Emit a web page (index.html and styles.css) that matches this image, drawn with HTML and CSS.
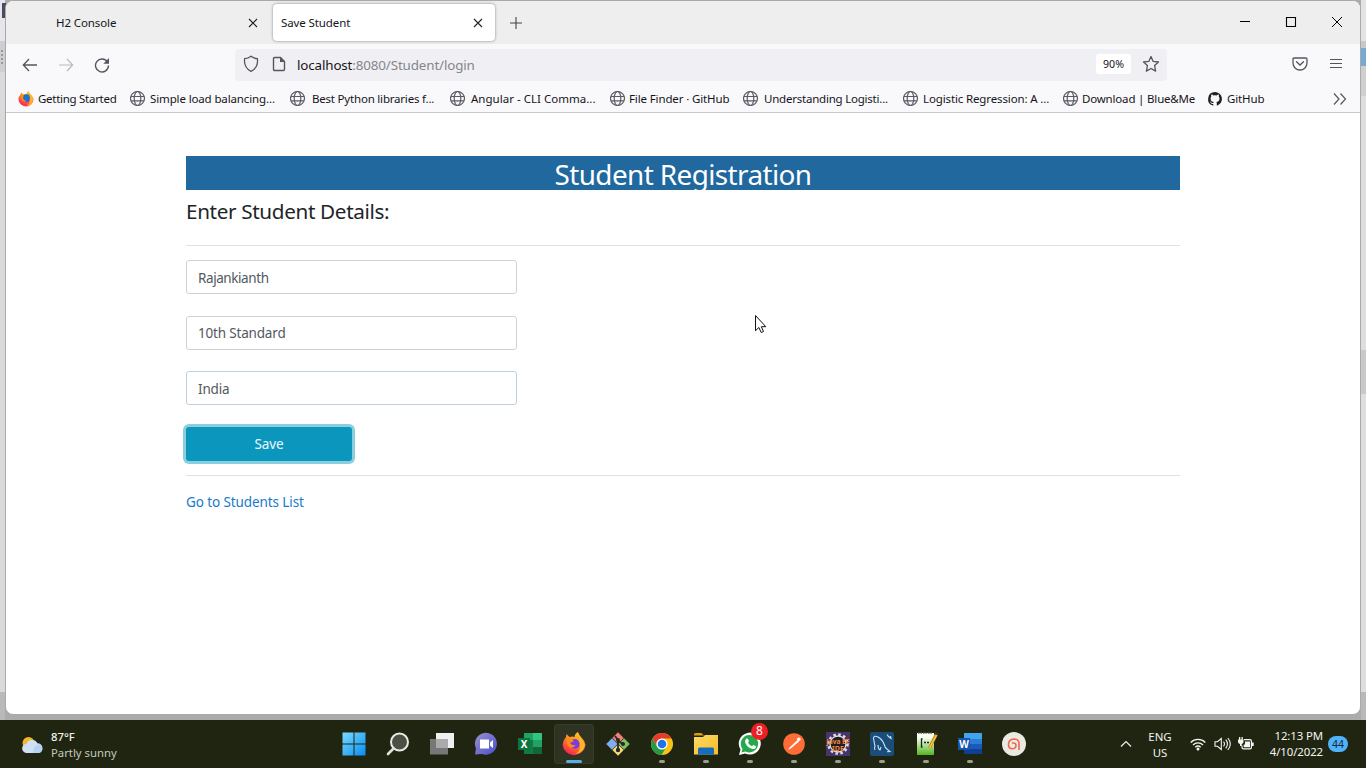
FILE: index.html
```html
<!DOCTYPE html>
<html lang="en">
<head>
<meta charset="utf-8">
<title>Save Student</title>
<link rel="stylesheet" href="styles.css">
</head>
<body>
<svg class="defs" width="0" height="0">
  <symbol id="globe" viewBox="0 0 16 16"><g fill="none" stroke="#5b5b66" stroke-width="1.2"><circle cx="7.500" cy="7.500" r="7"/><ellipse cx="7.500" cy="7.500" rx="3.3" ry="7"/><path d="M1 5.500h13M1 9.800h13"/></g></symbol>
  <symbol id="close" viewBox="0 0 10 10"><path d="M1 1l8 8M9 1l-8 8" stroke="#222" stroke-width="1.1"/></symbol>
  <symbol id="firefox" viewBox="0 0 24 24">
    <path d="M16 0q1 3 3 5 4 4 4.500 8A11.500 11.500 0 0 1 .6 12.500Q1 8 4 5l.5-3 3 3q3-1 5 0 0-3 3.500-5z" fill="url(#ffg)"/>
    <path d="M17 6q5 3 5.500 7-1 8-9 9 7-4 3.500-11z" fill="#ffb52e"/>
    <path d="M7 9l4-1.500q2-1 4 0 4 3 2 7-3 4-7 1-3-1-3-6.500z" fill="#7a3dd6"/>
    <path d="M5 7q4-1 7 2l-4 2q2 3 6 2-4 5-8 1-2-3-1-7z" fill="#ff8b1c"/>
  </symbol>
  <linearGradient id="ffg" x1=".8" y1="0" x2=".25" y2="1"><stop offset="0" stop-color="#ffd32b"/><stop offset=".45" stop-color="#ff8a16"/><stop offset="1" stop-color="#f5195d"/></linearGradient>
  <linearGradient id="wing" x1="0" y1="0" x2="1" y2="1"><stop offset="0" stop-color="#78dcff"/><stop offset="1" stop-color="#078cf0"/></linearGradient>
  <linearGradient id="fold" x1="0" y1="0" x2="1" y2="1"><stop offset="0" stop-color="#ffd965"/><stop offset="1" stop-color="#f7bd27"/></linearGradient>
  <linearGradient id="npad" x1="0" y1="0" x2="0" y2="1"><stop offset=".2" stop-color="#f8fff2"/><stop offset="1" stop-color="#55b51e"/></linearGradient>
  <linearGradient id="chat" x1="0" y1="0" x2="1" y2="1"><stop offset="0" stop-color="#9a92cf"/><stop offset="1" stop-color="#494fc8"/></linearGradient>
</svg>

<div class="desktop">
  <aside class="strip strip-left"><i class="app-corner"></i><i class="grip"></i></aside>
  <main class="window">
    <header class="tabbar">
      <div class="tab"><span class="tab-name">H2 Console</span><svg class="x"><use href="#close"/></svg></div>
      <div class="tab tab-active"><span class="tab-name">Save Student</span><svg class="x"><use href="#close"/></svg></div>
      <svg class="plus" viewBox="0 0 14 14"><path d="M7 1v12M1 7h12" stroke="#444" stroke-width="1.1"/></svg>
      <div class="controls">
        <svg width="12" height="12"><path d="M1 5.500h10" stroke="#000"/></svg>
        <svg width="12" height="12"><path d="M1.500 1.500h9v9h-9z" fill="none" stroke="#000" stroke-width="1.100"/></svg>
        <svg width="12" height="12"><path d="M1 1l10 10M11 1L1 11" stroke="#000"/></svg>
      </div>
    </header>

    <nav class="navbar">
      <svg class="back" width="16" height="14" viewBox="0 0 16 14"><path d="M15 7H1.500M7 1L1.300 7 7 13" fill="none" stroke="#555560" stroke-width="1.300"/></svg>
      <svg class="forward" width="16" height="14" viewBox="0 0 16 14"><path d="M1 7h13.500M9 1l5.700 6L9 13" fill="none" stroke="#b9b9c0" stroke-width="1.200"/></svg>
      <svg class="reload" width="16" height="16" viewBox="0 0 16 16"><path d="M13.500 5A6.500 6.500 0 1 0 14.500 8.600" fill="none" stroke="#555560" stroke-width="1.400"/><path d="M15 1v5.700H9.300z" fill="#555560"/></svg>
      <div class="urlbar">
        <svg width="16" height="18" viewBox="0 0 16 18"><path d="M8 1.200C6 2.800 4 3.500 1.600 3.700 1 9 3 14 8 16.400 13 14 15 9 14.400 3.700 12 3.500 10 2.800 8 1.200z" fill="none" stroke="#555560" stroke-width="1.300"/></svg>
        <svg class="page-icon" width="14" height="16" viewBox="0 0 14 16"><path d="M2.700 1.500H8.500L12.500 5.500v7.800q0 1.200-1.200 1.200H2.700q-1.200 0-1.200-1.200V2.700q0-1.200 1.200-1.200z" fill="none" stroke="#555560" stroke-width="1.400"/><path d="M8 1.500v4.500h4.500z" fill="#555560"/></svg>
        <span class="url"><b>localhost</b>:8080/Student/login</span>
        <span class="zoom">90%</span>
        <svg class="star" width="18" height="18" viewBox="0 0 18 18"><path d="M9 1.500l2.200 4.900 5.300.6-3.900 3.600 1 5.500L9 13.500l-4.600 2.600 1-5.500L1.500 7l5.300-.6z" fill="none" stroke="#555560" stroke-width="1.300" stroke-linejoin="round"/></svg>
      </div>
      <svg class="pocket" width="16" height="14" viewBox="0 0 16 14"><path d="M2.300 1h11.400q1.300 0 1.300 1.300V6a7 7 0 0 1-14 0V2.300Q1 1 2.300 1zM4.500 4.800L8 8l3.500-3.200" fill="none" stroke="#555560" stroke-width="1.300" stroke-linecap="round"/></svg>
      <svg class="menu" width="12" height="12"><path d="M0 1.500h12M0 5.500h12M0 9.500h12" stroke="#555560" stroke-width="1.200"/></svg>
    </nav>

    <div class="bookmarks">
      <a class="bm bm-start"><svg><use href="#firefox"/><circle cx="8.500" cy="6.500" r="3.300" fill="#1674d1"/></svg><span>Getting Started</span></a>
      <a class="bm bm-load"><svg><use href="#globe"/></svg><span>Simple load balancing...</span></a>
      <a class="bm bm-python"><svg><use href="#globe"/></svg><span>Best Python libraries f...</span></a>
      <a class="bm bm-angular"><svg><use href="#globe"/></svg><span>Angular - CLI Comma...</span></a>
      <a class="bm bm-finder"><svg><use href="#globe"/></svg><span>File Finder · GitHub</span></a>
      <a class="bm bm-underst"><svg><use href="#globe"/></svg><span>Understanding Logisti...</span></a>
      <a class="bm bm-logistic"><svg><use href="#globe"/></svg><span>Logistic Regression: A ...</span></a>
      <a class="bm bm-download"><svg><use href="#globe"/></svg><span>Download | Blue&amp;Me</span></a>
      <a class="bm bm-github"><svg viewBox="0 0 16 16"><path fill="#202024" d="M8 1a7 7 0 0 0-2.200 13.600c.4.100.5-.1.500-.3v-1.300c-2 .4-2.500-.9-2.700-1.400-.2-.5-.6-.9-.9-1.100.7-.2 1.300.4 1.600.9.500.8 1.300.8 2 .5.100-.5.300-.8.500-1-1.600-.2-3.200-.8-3.200-3.500 0-.8.300-1.400.7-1.900-.1-.2-.3-.9.100-1.900 0 0 .7-.1 2 .8a7 7 0 0 1 3.300 0c1.300-.9 2-.8 2-.8.300 1 .100 1.700.100 1.900.4.500.7 1.100.7 1.900 0 2.700-1.700 3.300-3.200 3.500.3.200.5.700.5 1.300v2.100c0 .2.100.4.500.3A7 7 0 0 0 8 1z"/></svg><span>GitHub</span></a>
      <svg class="more" width="14" height="12"><path d="M1 .5L6 6l-5 5.500M7.500.5L12.500 6l-5 5.500" fill="none" stroke="#555560" stroke-width="1.200"/></svg>
    </div>

    <section class="page">
      <h1>Student Registration</h1>
      <h2>Enter Student Details:</h2>
      <hr>
      <form class="form">
        <div class="field">Rajankianth</div>
        <div class="field field-grade">10th Standard</div>
        <div class="field field-country">India</div>
        <div class="save">Save</div>
      </form>
      <hr>
      <a class="list-link">Go to Students List</a>
      <svg class="cursor" width="13" height="20" viewBox="0 0 13 20"><path d="M1.500 1.500v15.200l3.400-3.200 2.300 5 2.300-1-2.200-4.800h4.500z" fill="#fff" stroke="#111"/></svg>
    </section>
  </main>
  <aside class="strip strip-right"></aside>
</div>

<footer class="taskbar">
  <div class="weather">
    <svg width="22" height="18" viewBox="0 0 22 18"><circle cx="6.500" cy="7" r="6" fill="#f5b52c"/><path d="M5 17a4.600 4.600 0 0 1-.5-9.200 6 6 0 0 1 11-.5A5 5 0 0 1 17 17z" fill="#cfe2f5"/><path d="M11 17q0-8 6.500-9a4.800 4.800 0 0 1-.5 9z" fill="#b4d3f1"/></svg>
    <div><p class="temp">87°F</p><p class="sky">Partly sunny</p></div>
  </div>
  <div class="apps">
    <div class="app"><svg viewBox="0 0 24 24"><path fill="url(#wing)" d="M.5.500h11v11H.5zM12.500.500h11v11h-11zM.5 12.500h11v11H.5zM12.500 12.500h11v11h-11z"/></svg></div>
    <div class="app"><svg viewBox="0 0 24 24"><circle cx="13.500" cy="10" r="8.500" fill="#4b5044" stroke="#e9e9e5" stroke-width="2"/><path d="M7.500 16.500L2 22" stroke="#deded8" stroke-width="2.600" stroke-linecap="round"/></svg></div>
    <div class="app"><svg viewBox="0 0 24 24"><path d="M6 1h18v15H6z" fill="#efefef"/><path d="M0 7h18v15.500H0z" fill="#777"/><path d="M6 7h12v9H6z" fill="#aaa"/></svg></div>
    <div class="app"><svg viewBox="0 0 24 24"><path d="M1 22.500l1-6A11 11 0 1 1 8 22z" fill="url(#chat)"/><path d="M6 7.500h9v9H6zM16 10.500l3-2.500v8l-3-2.500z" fill="#fff"/></svg></div>
    <div class="app"><svg viewBox="0 0 24 24"><path d="M6 1h18v21H6z" fill="#21a366"/><path d="M6 8h9v14H6z" fill="#107c41"/><path d="M15 1h9v7h-9z" fill="#33c481"/><path d="M15 15h9v7h-9z" fill="#12663c"/><path d="M0 6h12v12H0z" fill="#0d7440"/><text class="badge-letter" x="6" y="15.500">X</text></svg></div>
    <div class="app app-active"><svg viewBox="0 0 24 24"><use href="#firefox"/></svg><i class="dot dot-active"></i></div>
    <div class="app"><svg viewBox="0 0 24 24"><g transform="rotate(45 12 12)"><path d="M3.700 3.700h8v8h-8z" fill="#f08078"/><path d="M12.300 3.700h8v8h-8z" fill="#82be5f"/><path d="M3.700 12.300h8v8h-8z" fill="#80adf0"/><path d="M12.300 12.300h8v8h-8z" fill="#f7dc7b"/></g><path d="M9 4l3 4v10M12 9l5 3" stroke="#28272a" stroke-width="1.800" fill="none"/><circle cx="12" cy="8" r="2" fill="#28272a"/><circle cx="17" cy="12" r="2" fill="#28272a"/><circle cx="12" cy="18" r="2.200" fill="#28272a"/></svg></div>
    <div class="app"><svg viewBox="0 0 24 24"><circle cx="12" cy="12" r="11" fill="#fbc116"/><path d="M2.500 6.500A11 11 0 0 1 21.500 6.500H12a5.500 5.500 0 0 0-4.800 8.200z" fill="#e33b2e"/><path d="M2.500 6.500A11 11 0 0 0 11.500 23l5-8.200a5.500 5.500 0 0 1-9.300 0z" fill="#229a48"/><circle cx="12" cy="12" r="5.600" fill="#fff"/><circle cx="12" cy="12" r="4.300" fill="#1d73e8"/></svg><i class="dot"></i></div>
    <div class="app"><svg viewBox="0 0 24 24"><path d="M0 2.500q0-1.500 1.500-1.500h6l2.500 2.500H0z" fill="#d99c16"/><path d="M0 5h9l2-2h13v19.500H0z" fill="url(#fold)"/><path d="M4 22.500V17q0-1.500 1.500-1.500h13q1.500 0 1.500 1.500v5.500z" fill="#176dbd"/></svg><i class="dot"></i></div>
    <div class="app"><svg viewBox="0 0 24 24"><path d="M1 23l1.500-5.500A11 11 0 1 1 7 21.500z" fill="#fff"/><path d="M3.500 20.500l1-3.500a8.700 8.700 0 1 1 3 2.500z" fill="#26a94c"/><path d="M8.500 6.500l1.500.2 1 2.800-1 1.300q1.500 2.500 4 3.500l1.300-1.500 2.700 1.400q0 2.800-3 2.800-6-1-8-7 0-2.500 1.500-3.500z" fill="#fff"/></svg><b class="badge">8</b><i class="dot"></i></div>
    <div class="app"><svg viewBox="0 0 24 24"><circle cx="12" cy="12" r="10.800" fill="#ff6c37"/><path d="M6 18l1.500-2.500L15.500 8l1.500 1.500-7.500 6.500z" fill="#fff"/><circle cx="16.800" cy="7.300" r="1.800" fill="#fff"/></svg><i class="dot"></i></div>
    <div class="app"><svg viewBox="0 0 24 24"><path d="M0 0h24v24H0z" fill="#46346d"/><circle cx="12" cy="12" r="9.500" fill="none" stroke="#ddd" stroke-width="2.600" stroke-dasharray="2.500 2.470"/><circle cx="12" cy="12" r="8" fill="#211d26" stroke="#ddd" stroke-width="1.300"/><text class="ide" x="12" y="11.500" textLength="23" lengthAdjust="spacingAndGlyphs">Java EE</text><text class="ide" x="12" y="18.500">IDE</text></svg><i class="dot"></i></div>
    <div class="app"><svg viewBox="0 0 24 24"><rect width="24" height="24" rx="2" fill="#1b4d7b"/><path d="M5 18q-1-2 0-4-1-4-1.500-8Q4 3 8 5q4 2 6 7 1 4 3 5l3 2.500-3 .3M8 13q0 4 2 5l1-3M17 2.500l1.500 2 2.500 2-.5-2.500" fill="none" stroke="#c9e5f7" stroke-width="1.100"/></svg><i class="dot"></i></div>
    <div class="app"><svg viewBox="0 0 24 24"><path d="M3 1h17v22H3z" fill="url(#npad)"/><path d="M4 1h15" stroke="#555" stroke-width="1.700" stroke-dasharray="1.500 1"/><path d="M8.500 7h-1v8h1M10 10.500h2M13 10.500h2" fill="none" stroke="#222" stroke-width="1.300"/><path d="M22.500 2l-7 14" stroke="#c98a19" stroke-width="3.200"/><path d="M22.500 3l-7 13" stroke="#f6c84a" stroke-width="1.500"/><path d="M21 1l3 1.500" stroke="#333" stroke-width="2"/></svg><i class="dot"></i></div>
    <div class="app"><svg viewBox="0 0 24 24"><path d="M6 1h18v21H6z" fill="#185abd"/><path d="M6 1h18v6H6z" fill="#41a5ee"/><path d="M6 7h18v5H6z" fill="#2b7cd3"/><path d="M6 17h18v5H6z" fill="#103f91"/><path d="M0 6h12v12H0z" fill="#1855b0"/><text class="badge-letter" x="6" y="15.500">W</text></svg><i class="dot"></i></div>
    <div class="app"><svg viewBox="0 0 24 24"><circle cx="12" cy="12" r="12" fill="#eae9e2"/><path d="M17 17.500V11Q16.500 7 12 7q-5.500.5-5.500 5.500 0 4 3.700 4.300 3.600 0 3.800-3.300-.3-3-3.500-2.500" fill="none" stroke="#ed6a50" stroke-width="1.600" stroke-linecap="round"/></svg></div>
  </div>
  <div class="tray">
    <svg class="chev" width="12" height="8"><path d="M1 6.500L6 1.500l5 5" fill="none" stroke="#f1f1ee" stroke-width="1.200"/></svg>
    <p class="lang">ENG<br>US</p>
    <svg class="wifi" width="16" height="14" viewBox="0 0 16 14"><g fill="none" stroke="#f4f4f0" stroke-width="1.300"><path d="M.7 5.500a10.300 10.300 0 0 1 14.600 0M3 8a7 7 0 0 1 10 0M5.300 10.200a4 4 0 0 1 5.400 0"/></g><circle cx="8" cy="12" r="1.500" fill="#f4f4f0"/></svg>
    <svg class="sound" width="17" height="14" viewBox="0 0 17 14"><path d="M1 4.700h2.500L7.300 1.500v11L3.500 9.300H1zM9.500 4.700q2 2.300 0 4.600M11.700 2.700q3.500 4.300 0 8.600M13.800 1q5 6 0 12" fill="none" stroke="#f4f4f0" stroke-width="1.100"/></svg>
    <svg class="battery" width="16" height="14" viewBox="0 0 16 14"><path d="M6 2.600h6q1.400 0 1.400 1.400v6.500q0 1.400-1.400 1.400H5.500Q4 11.900 4 10.500V8.500" fill="none" stroke="#f4f4f0" stroke-width="1.200"/><path d="M7 4.500h5v5.700H5.700V7.500H7zM14 5.500h1.700v3.400H14zM0 2.500h5.500V5q0 1.500-1.800 2v2H2V7Q0 6.500 0 5zM1 0h1.300v3H1zM3.500 0h1.300v3H3.500z" fill="#f4f4f0"/></svg>
    <p class="clock">12:13 PM<br><span>4/10/2022</span></p>
    <b class="count">44</b>
  </div>
</footer>
</body>
</html>
```
FILE: styles.css
```css
* { box-sizing: border-box; }
body { margin: 0; width: 1366px; height: 768px; overflow: hidden; font-family: "Noto Sans", "Open Sans", sans-serif; color: #15141a; }
p, h1, h2 { margin: 0; font-weight: 400; }
.defs { position: absolute; }
svg { flex: none; display: block; }

.desktop { display: flex; height: 720px; background: #ababab; }
.strip { flex: none; height: 720px; }
.strip-left { width: 5px; background: linear-gradient(#e5e5ec 0 41px, #cfcfcf 41px 72px, #dadada 72px 692px, #b9b9b9 692px); }
.strip-right { width: 5px; background: linear-gradient(#e3e3e3 0 41px, #c8c8c8 41px 48px, #76a9d4 48px 66px, #cfcfcf 66px 96px, #dedede 96px 350px, #c9c9c9 350px 394px, #dedede 394px 692px, #b9b9b9 692px); }
.app-corner { display: block; width: 4px; height: 15px; margin: 3px 0 0 2px; background: #4a4a62; }
.grip { display: block; width: 2px; height: 14px; margin: 32px 0 0 1px; background: repeating-linear-gradient(#999 0 2px, #cfcfcf 2px 4px); }
.window { width: 1356px; height: 715px; display: flex; flex-direction: column; background: #fff; border: 1px solid #a9a9a9; border-radius: 8px; overflow: hidden; }

.tabbar { flex: none; display: flex; align-items: center; height: 43px; background: #eee; }
.tab { display: flex; align-items: center; justify-content: space-between; width: 222px; height: 37px; margin: 0 5px 0 0; padding: 0 12px 0 8px; font-size: 11.5px; letter-spacing: -.1px; }
.tab:first-child { width: 262px; padding: 0 10px 0 50px; }
.tab-active { background: #fff; border-radius: 4px; box-shadow: 0 0 3px rgba(0,0,0,.45); }
.x { width: 10px; height: 10px; }
.plus { width: 14px; height: 14px; margin-left: 9px; }
.controls { display: flex; gap: 34px; margin-left: auto; padding: 0 17px 2px 0; }

.navbar { flex: none; display: flex; align-items: center; height: 41px; background: #f9f9fb; }
.back { margin-left: 16px; }
.forward { margin-left: 20px; }
.reload { margin-left: 20px; }
.urlbar { display: flex; align-items: center; width: 932px; height: 32px; margin-left: 125px; padding: 0 7px 2px 8px; background: #f0f0f4; border-radius: 4px; }
.page-icon { margin-left: 13px; }
.url { margin: 2px 0 0 11px; font-size: 13.4px; letter-spacing: -.14px; color: #85858c; }
.url b { font-weight: 400; color: #15141a; }
.zoom { width: 35px; height: 20px; margin-left: auto; border-radius: 3px; background: #fff; font-size: 10.6px; line-height: 21px; text-align: center; }
.star { margin-left: 11px; }
.pocket { margin: 0 0 2px 125px; }
.menu { margin: 0 0 1px 22px; }

.bookmarks { flex: none; display: flex; align-items: center; height: 28px; padding-left: 12px; background: #f9f9fb; border-bottom: 1px solid #c9c9cc; font-size: 11.5px; letter-spacing: -.13px; }
.bm { display: flex; align-items: center; gap: 4px; width: 160px; white-space: nowrap; }
.bm svg { width: 16px; height: 16px; }
.bm-start { width: 112px; letter-spacing: -.28px; }
.bm-python { gap: 6px; letter-spacing: -.2px; }
.bm-underst { gap: 5px; letter-spacing: -.22px; }
.bm-angular { gap: 5px; letter-spacing: .02px; }
.bm-finder { width: 133px; gap: 3px; }
.bm-download { width: 144px; gap: 3px; letter-spacing: -.18px; }
.bm-github { width: 126px; }

.page { position: relative; flex: 1; padding: 43px 180px 0; }
h1 { height: 34px; background: #20689d; color: #fff; font-size: 27.9px; line-height: 37px; letter-spacing: -.6px; text-align: center; }
h2 { height: 55px; padding-top: 7px; color: #212529; font-size: 20.7px; letter-spacing: -.35px; line-height: 29px; }
hr { height: 1px; margin: 0; border: 0; background: #e1e1e2; }
.form { display: flex; flex-direction: column; padding: 14px 0 14px; gap: 21.500px; }
.field { width: 331px; height: 34px; padding-left: 11px; border: 1px solid #ced1d5; border-radius: 3px; color: #52585e; font-size: 13.5px; letter-spacing: -.18px; line-height: 34px; }
.field:first-child { letter-spacing: -.42px; }
.field-grade { line-height: 32px; }
.field-country { border-color: #bfcfe0; }
.save { width: 166px; height: 34px; border-radius: 3px; background: #0b97bd; box-shadow: 0 0 0 3px #8bcfdf; color: #eefaff; font-size: 13.500px; letter-spacing: -.15px; line-height: 34px; text-align: center; }
.list-link { display: block; padding-top: 16px; color: #187bca; font-size: 13.500px; letter-spacing: -.1px; line-height: 20px; }
.cursor { position: absolute; left: 748px; top: 201px; }

.taskbar { display: flex; height: 48px; background: #202512; color: #f4f4ef; }
.weather { display: flex; align-items: center; gap: 7px; width: 334px; padding: 2px 0 0 22px; font-size: 11.3px; line-height: 16px; }
.temp { font-weight: 500; }
.sky { color: #c4c8ba; }
.apps { display: flex; align-items: center; gap: 4px; }
.app { position: relative; display: flex; align-items: center; justify-content: center; width: 40px; height: 40px; }
.app svg { width: 24px; height: 24px; }
.app-active { background: #2e3322; border-radius: 4px; box-shadow: inset 0 0 0 1px #363b2b; }
.dot { position: absolute; bottom: 1px; left: 17px; width: 6px; height: 3px; border-radius: 2px; background: #9b9f90; }
.dot-active { left: 12px; width: 16px; background: #55b0e5; }
.badge { position: absolute; top: -1px; right: 2px; width: 17px; height: 17px; border-radius: 50%; background: #ed1e24; color: #fff; font-size: 12px; font-weight: 400; line-height: 16px; text-align: center; }
.badge-letter { fill: #fff; font-size: 10px; font-weight: 700; text-anchor: middle; }
.ide { fill: #f48536; font-size: 7px; font-weight: 700; text-anchor: middle; }
.tray { display: flex; align-items: center; margin-left: auto; padding-right: 18px; font-size: 11.400px; line-height: 16px; text-align: center; }
.lang { width: 26px; margin: 2px 0 0 15px; }
.wifi { margin-left: 17px; }
.sound { margin-left: 8px; }
.battery { margin-left: 7px; }
.clock { width: 56px; margin-left: 13px; text-align: right; white-space: nowrap; letter-spacing: -.1px; }
.count { width: 20px; height: 16px; margin-left: 5px; border-radius: 8px; background: #4db4fb; color: #14283a; font-size: 10.500px; font-weight: 400; line-height: 16px; }
```
